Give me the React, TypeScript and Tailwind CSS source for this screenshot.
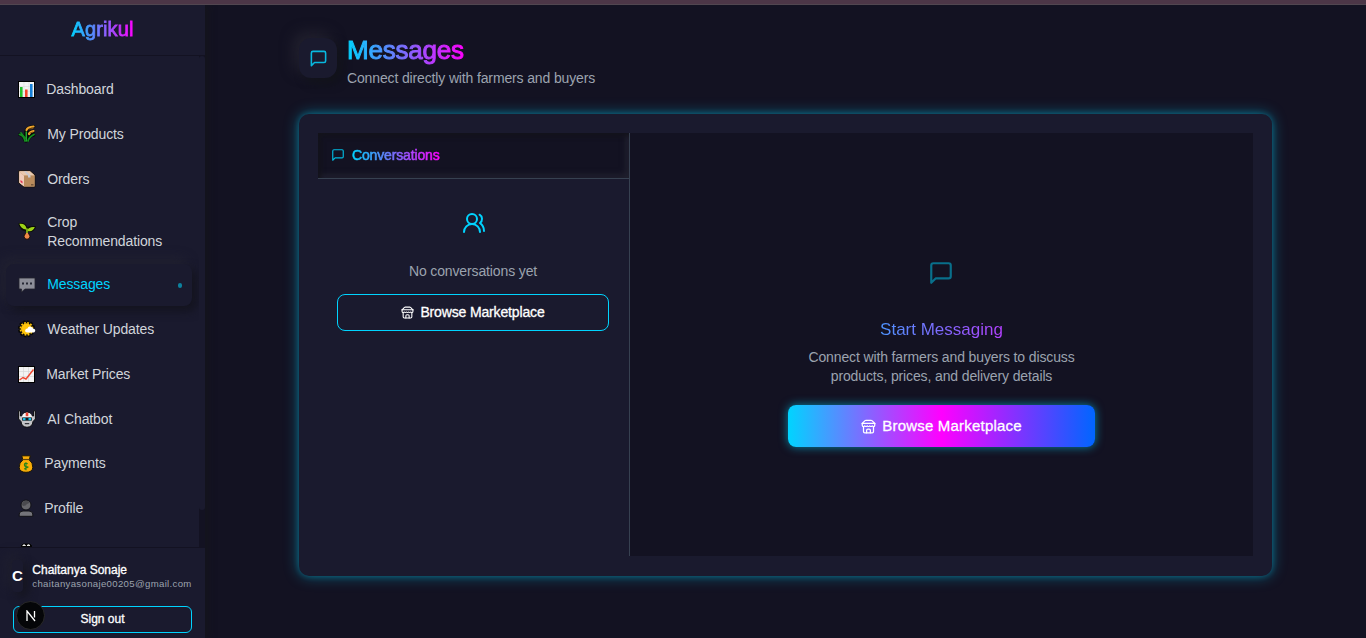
import React from "react";
import { UsersRound } from "lucide-react";

const gradientText =
  "bg-linear-to-r/srgb from-[#00d4ff] to-[#ff00ff] bg-clip-text text-transparent";

function MessageSquare({ className = "" }: { className?: string }) {
  return (
    <svg
      viewBox="0 0 24 24"
      fill="none"
      stroke="currentColor"
      strokeWidth="2"
      strokeLinecap="round"
      strokeLinejoin="round"
      className={`shrink-0 ${className}`}
    >
      <path d="M21 15a2 2 0 0 1-2 2H7l-4 4V5a2 2 0 0 1 2-2h14a2 2 0 0 1 2 2z" />
    </svg>
  );
}

function Store({ className = "" }: { className?: string }) {
  return (
    <svg
      viewBox="0 0 24 24"
      fill="none"
      stroke="currentColor"
      strokeWidth="2"
      strokeLinecap="round"
      strokeLinejoin="round"
      className={`shrink-0 ${className}`}
    >
      <path d="m2 7 4.41-4.41A2 2 0 0 1 7.83 2h8.34a2 2 0 0 1 1.42.59L22 7" />
      <path d="M4 12v8a2 2 0 0 0 2 2h12a2 2 0 0 0 2-2v-8" />
      <path d="M15 22v-4a2 2 0 0 0-2-2h-2a2 2 0 0 0-2 2v4" />
      <path d="M2 7h20" />
      <path d="M22 7v3a2 2 0 0 1-2 2a2.700 2.700 0 0 1-1.590-.63.7.7 0 0 0-.82 0A2.700 2.700 0 0 1 16 12a2.700 2.700 0 0 1-1.590-.63.7.7 0 0 0-.82 0A2.700 2.700 0 0 1 12 12a2.700 2.700 0 0 1-1.590-.63.7.7 0 0 0-.82 0A2.700 2.700 0 0 1 8 12a2.700 2.700 0 0 1-1.590-.63.7.7 0 0 0-.82 0A2.700 2.700 0 0 1 4 12a2 2 0 0 1-2-2V7" />
    </svg>
  );
}

function Glyph({ children, className = "" }: { children: React.ReactNode; className?: string }) {
  return (
    <svg viewBox="0 0 18 18" className={`h-[18px] w-[18px] shrink-0 ${className}`}>
      {children}
    </svg>
  );
}

const ChartIcon = () => (
  <Glyph className="mt-[1px]">
    <rect x="0.5" y="0.5" width="16" height="16" fill="#f4f4f4" stroke="#000" />
    <path d="M1 5.500h15M1 10.500h15M6 1v15M11 1v15" stroke="#dcdcdc" strokeWidth="0.6" />
    <rect x="2" y="6" width="2.600" height="10" fill="#22c12c" />
    <rect x="7" y="8.500" width="2.600" height="7.500" fill="#f4462c" />
    <rect x="12" y="3" width="2.600" height="13" fill="#1780d8" />
  </Glyph>
);

const WheatIcon = () => (
  <Glyph>
    <g strokeLinecap="round" strokeLinejoin="round" fill="none">
      <path d="M8 16V7Q8.500 2.500 15.500 1.500M9 15V11Q10 7 15 6.500M7 15Q5.500 10 2 9.500M10 15Q11 11 15.500 10" stroke="#070907" strokeWidth="3.600" />
      <path d="M7 16Q6 11 1.500 9.500M3 8l4 5M10 16Q11 12 16 9.500" stroke="#148c20" strokeWidth="1.800" />
      <path d="M8.300 16V7" stroke="#20a52d" strokeWidth="1.500" />
      <path d="M8.500 5Q9.500 2 15.500 1.500M11 9Q12 6.500 15.500 6" stroke="#f0a52d" strokeWidth="2.200" />
      <path d="M11 4l4-.5M12 8l3-1" stroke="#8b5813" strokeWidth="0.9" />
    </g>
  </Glyph>
);

const BoxIcon = () => (
  <Glyph>
    <path d="M.7.700H12L17 5V17H6L.7 13Z" fill="#d9b08c" stroke="#16110e" strokeLinejoin="round" />
    <path d="M1.200 1.200H12L16.500 5.500H6Z" fill="#e9c9af" />
    <path d="M1.200 1.700L6 6V16.500L1.200 12.500Z" fill="#efccb9" />
    <path d="M6 5.500H16.500V16.500H6Z" fill="#b98b5c" />
    <path d="M6 1.200H8L12.500 5.500V7.500H10V5.500Z" fill="#c6c9d2" />
    <path d="M2.500 10L4.500 11.500V13.500L2.500 12Z" fill="#e32f51" />
    <path d="M13 14h2.500v1.500H13Z" fill="#75583d" />
  </Glyph>
);

const SeedlingIcon = () => (
  <Glyph className="-mt-[1px]">
    <path
      d="M9 13V8.500Q3 8.500 1.300 2Q7.500 1 9 6.500Q11 4.500 17 5Q15.500 10 9.500 9"
      fill="#87bd10"
      stroke="#0b0d05"
      strokeWidth="1.800"
      strokeLinejoin="round"
    />
    <path d="M1.300 1.800Q7.500 1 8.700 7Q3.500 8 1.300 1.800ZM9.500 9Q10.500 4.600 16.800 5.100Q15 10.300 9.500 9Z" fill="#9dd317" />
    <path d="M9 6.500V13" stroke="#85b917" strokeWidth="1.800" />
    <circle cx="9" cy="14.300" r="3" fill="#ef8748" stroke="#1c0e08" />
    <path d="M9 11v2.500" stroke="#ef8748" strokeWidth="2" />
  </Glyph>
);

const SpeechIcon = () => (
  <Glyph>
    <path d="M1 2H17V13H7L3.500 16V13H1Z" fill="#8d8e98" stroke="#25252e" strokeWidth="0.8" />
    <path d="M4 6.500h2v2H4zM8 6.500h2v2H8zM12 6.500h2v2h-2z" fill="#272834" />
  </Glyph>
);

const WeatherIcon = () => (
  <Glyph className="-mt-[1px]">
    <circle cx="8.500" cy="8.800" r="7.300" fill="#090909" stroke="#090909" strokeWidth="2.600" strokeDasharray="2.600 1.220" />
    <circle cx="8.500" cy="8.800" r="6.100" fill="none" stroke="#ffc40a" strokeWidth="1.600" strokeDasharray="1.800 1.394" />
    <circle cx="8.500" cy="8.800" r="5.500" fill="#ffc40a" />
    <path d="M9.500 12.500Q6 12 7.500 9.500Q8.500 8.500 9.500 8.500Q10.500 5.500 13.500 7Q15 7.500 15 8.500Q18 9 17 11.500Q16.500 12.500 15.500 12.500Z" fill="#fff" />
  </Glyph>
);

const MarketIcon = () => (
  <Glyph className="mt-[1px]">
    <rect x="0.5" y="0.5" width="16" height="16" fill="#f3f3f3" stroke="#000" />
    <path d="M1 5.500h15M1 10.500h15M5.500 1v15M10.500 1v15" stroke="#d5d5d5" strokeWidth="0.700" />
    <path d="M1.500 14L5 11.500L8 13L15.500 3.500" stroke="#ef4630" strokeWidth="1.400" fill="none" />
  </Glyph>
);

const RobotIcon = () => (
  <Glyph>
    <path
      d="M.6.800h1.800V6L4.500 5.500Q5 2 9 2T13.500 5.500L15.600 6V.8h1.800V9L15 11.500Q14.500 17 9 17.300Q3.500 17 3 11.500L.6 9Z"
      fill="#c4c4c8"
      stroke="#0c0c0e"
    />
    <path d="M4 7Q4.500 2.800 9 2.800T14 7Z" fill="#f4f4f4" />
    <path d="M7.700 2.500h2.600v3.700H7.700z" fill="#f04432" />
    <path d="M4.200 7.500h9.600v3.200H4.200z" fill="#15191d" />
    <path d="M5 8h2.500v2.200H5zM10.500 8h2.500v2.200h-2.500z" fill="#17bfe8" />
    <path d="M6.800 13h4.400v1.300h-4.400z" fill="#34343a" />
  </Glyph>
);

const MoneyIcon = () => (
  <Glyph className="-mr-[2px] -ml-[1px]">
    <path d="M4.800.800h8.500L12.300 5Q16 7.500 15.800 12.500Q15.300 17.300 9 17.300T2.200 12.500Q2 7.500 5.800 5Z" fill="#f9ad08" stroke="#1a1508" />
    <path d="M5.500 4.500h7" stroke="#60420c" strokeWidth="1.200" />
    <path d="M10.800 8.700Q7.200 7.500 7.400 9.800T10.200 11.900T7.200 13.900M9 7.200v8" stroke="#248519" strokeWidth="1.100" fill="none" />
  </Glyph>
);

const ProfileIcon = () => (
  <Glyph className="-mr-[2px] -ml-[1px]">
    <path d="M2.200 17.300V15Q2.500 12 6 12H12Q15.500 12 15.800 15V17.300Z" fill="#74747a" stroke="#111116" />
    <circle cx="9" cy="6" r="5" fill="#67676b" stroke="#111116" />
    <path d="M5 5.500Q6 .5 11.500 2.200Q13.500 4 10 5Q9 7 6 7Z" fill="#4a4a4e" />
  </Glyph>
);

const NextIcon = () => (
  <Glyph>
    <path d="M3.500 5V2.500L5 1H12L13.500 2.500V5Z" fill="#050505" stroke="#050505" strokeWidth="1" />
    <path d="M4.700 2.500Q6 .8 7.500 2.500ZM9 2.500Q10.500 .8 12 2.500Z" fill="#fff" stroke="#fff" strokeWidth="0.8" />
  </Glyph>
);

type Item = { label: string; Icon: () => React.ReactElement; active?: boolean; pad?: string };

const items: Item[] = [
  { label: "Dashboard", Icon: ChartIcon, pad: "ml-[10.300px]" },
  { label: "My Products", Icon: WheatIcon },
  { label: "Orders", Icon: BoxIcon },
  { label: "Crop Recommendations", Icon: SeedlingIcon },
  { label: "Messages", Icon: SpeechIcon, active: true },
  { label: "Weather Updates", Icon: WeatherIcon },
  { label: "Market Prices", Icon: MarketIcon, pad: "ml-[10.300px]" },
  { label: "AI Chatbot", Icon: RobotIcon },
  { label: "Payments", Icon: MoneyIcon },
  { label: "Profile", Icon: ProfileIcon },
];

function NavItem({ label, Icon, active, pad = "ml-[11.300px]" }: Item) {
  const height = label.startsWith("Crop") ? "h-[58px]" : "h-[41.750px]";
  const look = active
    ? "bg-[#1a1a2e] text-[#00d4ff] shadow-[5px_5px_10px_#14141f,-5px_-5px_12px_#222232]"
    : "text-[#d1d5db]";
  return (
    <a className={`flex w-[186px] shrink-0 items-center rounded-lg pr-2.5 pl-3 ${height} ${look}`}>
      <Icon />
      <span className={`flex-1 text-sm leading-[18.700px] tracking-[-0.13px] ${pad}`}>{label}</span>
      {active && <span className="mt-[2px] h-[5px] w-[4px] rounded-full bg-[#0c819e]" />}
    </a>
  );
}

function Sidebar() {
  return (
    <aside className="z-10 flex w-[205px] shrink-0 flex-col bg-[#1a1a2e] shadow-[3px_0_7px_#15151c]">
      <div className="flex h-[51px] shrink-0 items-center justify-center border-b border-[#131222] pb-0.5">
        <span className={`text-xl leading-6 tracking-[0.15px] [-webkit-text-stroke:0.8px_transparent] ${gradientText}`}>Agrikul</span>
      </div>
      <div className="flex min-h-0 flex-1 overflow-hidden">
        <nav className="flex w-[199px] flex-col gap-[3px] overflow-hidden pt-[12.500px] pl-1.5">
          {items.map((item) => (
            <NavItem key={item.label} {...item} />
          ))}
          <div className="shrink-0 pt-[11px] pl-3">
            <NextIcon />
          </div>
        </nav>
        <div className="w-1.5 bg-[#131222]">
          <div className="h-[454px] rounded-full bg-[#1a1a2e]" />
        </div>
      </div>
      <div className="flex h-[91px] shrink-0 flex-col border-t border-[#131222] pr-[13px] pl-3">
        <div className="flex h-[58px] items-center pb-[2px]">
          <div className="flex h-8 w-[11px] shrink-0 items-center justify-center rounded-sm bg-[#1a1a2e] text-[15px] font-bold text-white shadow-[5px_5px_10px_#15151f,-5px_-5px_12px_#20202f]">
            C
          </div>
          <div className="ml-[9.300px] whitespace-nowrap">
            <div className="pt-[1px] text-xs leading-[15px] text-white [-webkit-text-stroke:0.3px_white]">Chaitanya Sonaje</div>
            <div className="text-[9.600px] leading-[12px] tracking-[0.33px] text-[#9ca3af]">chaitanyasonaje00205@gmail.com</div>
          </div>
        </div>
        <div className="relative ml-[1px] flex h-[27px] items-center justify-center rounded-md border border-[#00d4ff] pb-0.5 text-xs text-white [-webkit-text-stroke:0.3px_white]">
          Sign out
          <div className="absolute -top-[6px] left-[2px] flex h-[29px] w-[29px] items-center justify-center rounded-full border border-[#292929] bg-[#050608]">
            <svg viewBox="0 0 12 12" className="h-3 w-3" fill="none" stroke="#fff" strokeWidth="1.300">
              <path d="M2 11V1L10 11" />
              <path d="M9.500 1V7.500" />
            </svg>
          </div>
        </div>
      </div>
    </aside>
  );
}

export default function App() {
  return (
    <div className="flex h-[638px] w-full flex-col overflow-hidden bg-[#131222] font-['Liberation_Sans',Arial,sans-serif]">
      <div className="z-20 h-[5px] shrink-0 border-b border-[#514650] bg-[#4c3647]" />
      <div className="flex min-h-0 flex-1">
        <Sidebar />
        <main className="flex flex-1 flex-col pl-[94px]">
          <header className="flex h-[109px] items-start pt-[33px]">
            <div className="flex h-[40px] w-[38px] items-center justify-center rounded-xl bg-[#1a1a2e] shadow-[5px_5px_10px_#12131a,-5px_-5px_14px_#242330]">
              <MessageSquare className="mt-[1px] ml-[1px] h-[19px] w-[19px] text-[#08b8df]" />
            </div>
            <div className="-mt-1 ml-2.5">
              <h1 className={`w-fit text-[26px] leading-[32px] tracking-[-0.2px] [-webkit-text-stroke:1px_transparent] ${gradientText}`}>Messages</h1>
              <p className="mt-0.5 text-sm leading-5 tracking-[-0.14px] text-[#9ca3af]">Connect directly with farmers and buyers</p>
            </div>
          </header>
          <section className="flex h-[462px] w-[973px] rounded-[10px] bg-[#1a1a2e] px-[19px] pt-[19px] pb-5 shadow-[0_0_6px_rgba(0,212,255,0.3),0_0_15px_rgba(0,212,255,0.4)]">
            <div className="flex w-[312px] shrink-0 flex-col border-r border-[#374151]">
              <div className="flex h-[46px] items-center border-b border-[#374151] bg-[#131222] pb-[1px] pl-[13px] shadow-[inset_3px_3px_5px_#13131b,inset_-3px_-3px_6px_#222230]">
                <MessageSquare className="h-3.5 w-3.5 text-[#00b9df]" />
                <h2 className={`ml-[7px] text-sm leading-5 tracking-[-0.15px] [-webkit-text-stroke:0.6px_transparent] ${gradientText}`}>Conversations</h2>
              </div>
              <div className="flex flex-col items-center pt-[32px] pr-5 pl-[19px]">
                <UsersRound className="ml-[1px] h-6 w-6 text-[#00d4ff]" />
                <p className="mt-[26px] text-sm leading-5 tracking-[-0.13px] text-[#9ca3af]">No conversations yet</p>
                <button className="mt-[13px] flex h-[37px] w-full items-center justify-center gap-1.5 rounded-lg border border-[#00d4ff] pb-[1px] text-sm tracking-[-0.15px] text-white [-webkit-text-stroke:0.3px_white]">
                  <Store className="h-[13px] w-[13px]" />
                  Browse Marketplace
                </button>
              </div>
            </div>
            <div className="flex flex-1 flex-col items-center bg-[#131222] pt-[127px]">
              <MessageSquare className="mr-[1px] h-[26px] w-[26px] text-[#096f8b]" />
              <h3 className={`mt-[32px] w-[307px] text-center text-[17px] leading-6 ${gradientText}`}>Start Messaging</h3>
              <p className="mt-1.5 w-[307px] px-4 text-center text-sm leading-[19px] tracking-[-0.13px] text-[#9ca3af]">
                Connect with farmers and buyers to discuss products, prices, and delivery details
              </p>
              <button className="mt-[19px] flex h-[42px] w-[307px] items-center justify-center gap-1.5 rounded-lg bg-linear-to-r/srgb from-[#00d4ff] via-[#ff00ff] to-[#0066ff] text-[15px] tracking-[0.2px] text-white shadow-[0_0_10px_rgba(0,212,255,0.6)] [-webkit-text-stroke:0.3px_white]">
                <Store className="h-[15px] w-[15px]" />
                Browse Marketplace
              </button>
            </div>
          </section>
        </main>
      </div>
    </div>
  );
}
